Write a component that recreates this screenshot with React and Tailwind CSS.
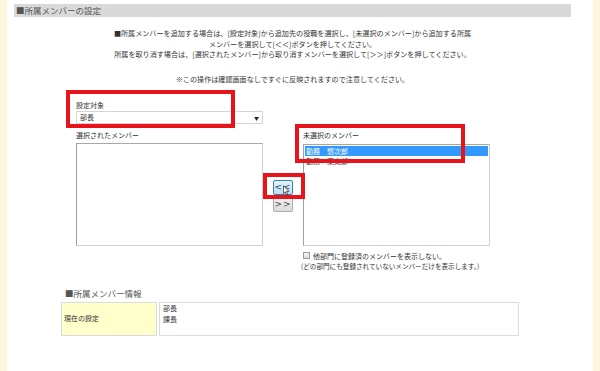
import React from "react";

const F = { fontFamily: '"Noto Sans CJK JP", "Noto Sans", sans-serif' };

export default function App() {
  return (
    <div className="relative flex w-[600px] h-[371px] overflow-hidden bg-white text-[#333]" style={F}>
      <div className="w-[7px] h-full bg-[#fff7dc]" />
      <div className="flex-1 flex flex-col pt-[4px] pl-[7px]">
        <div className="w-[557px] h-[13px] bg-[#d9d9d9] pl-[2px] text-[8.5px] leading-[13px] text-[#555]">
          ■所属メンバーの設定
        </div>
        <div className="w-[557px] mt-[11px] text-center text-[7.1px] leading-[10.5px] text-[#333]">
          <div>■所属メンバーを追加する場合は、[設定対象]から追加先の役職を選択し、[未選択のメンバー]から追加する所属</div>
          <div>メンバーを選択して[＜＜]ボタンを押してください。</div>
          <div>所属を取り消す場合は、[選択されたメンバー]から取り消すメンバーを選択して[＞＞]ボタンを押してください。</div>
          <div className="mt-[14.5px]">※この操作は確認画面なしですぐに反映されますので注意してください。</div>
        </div>

        <div className="flex ml-[62px] mt-[15px] text-[7px]">
          <div className="w-[187px] flex flex-col">
            <div className="h-[10px] leading-[10px]">設定対象</div>
            <div className="mt-[1px] h-[13px] border border-[#d4d4d4] bg-white flex items-center justify-between pl-[3px] pr-[3px]">
              <span className="leading-[11px]">部長</span>
              <span className="text-[5px] leading-[5px] text-[#222]">▼</span>
            </div>
            <div className="mt-[6px] h-[10px] leading-[10px]">選択されたメンバー</div>
            <div className="mt-[3px] h-[103px] border border-[#d0d0d0] border-l-[#a0a0a0] border-t-[#a8a8a8] bg-white" />
          </div>

          <div className="ml-[10px] w-[20px] pt-[80px] flex flex-col">
            <div className="h-[15px] rounded-[2px] border border-[#3c7fb1] bg-gradient-to-b from-[#e3f4fd] to-[#b9dff7] flex items-center justify-center text-[9px] leading-[10px] tracking-[1px] text-[#444]" style={{ fontFamily: '"DejaVu Sans", sans-serif' }}>
              &lt;&lt;
            </div>
            <div className="mt-[1px] h-[16px] rounded-[2px] border border-[#acacac] bg-gradient-to-b from-[#f2f2f2] to-[#dcdcdc] flex items-center justify-center text-[9px] leading-[10px] tracking-[1px] text-[#444]" style={{ fontFamily: '"DejaVu Sans", sans-serif' }}>
              &gt;&gt;
            </div>
          </div>

          <div className="ml-[10px] w-[187px] flex flex-col pt-[30px]">
            <div className="h-[10px] leading-[10px]">未選択のメンバー</div>
            <div className="mt-[4px] h-[102px] border border-[#d0d0d0] border-l-[#a0a0a0] border-t-[#a8a8a8] bg-white p-[1px]">
              <div className="h-[10px] leading-[10px] bg-[#3399ff] text-white pl-[1px]">勤務　惣次郎</div>
              <div className="h-[10px] leading-[10px] pl-[1px]">勤務　東太郎</div>
            </div>
            <div className="mt-[5px] h-[10px] flex items-center whitespace-nowrap">
              <span className="w-[7px] h-[7px] border border-[#999] bg-gradient-to-b from-[#f4f4f4] to-[#dedede] mr-[3px]" />
              <span className="leading-[10px]">他部門に登録済のメンバーを表示しない。</span>
            </div>
            <div className="h-[11px] leading-[11px] -ml-[2px] whitespace-nowrap text-[6.6px]">(どの部門にも登録されていないメンバーだけを表示します。)</div>
          </div>
        </div>

        <div className="ml-[51px] mt-[16px] h-[10px] text-[8.5px] leading-[10px] text-[#555]">■所属メンバー情報</div>
        <div className="ml-[47px] mt-[4px] w-[458px] h-[34px] flex gap-[2px] text-[7px]">
          <div className="w-[96px] h-full border border-[#dcdcdc] bg-[#ffffcc] flex items-center pl-[2px]">現在の設定</div>
          <div className="flex-1 h-full border border-[#dcdcdc] bg-white pl-[3px] leading-[11px]">
            <div>部長</div>
            <div>課長</div>
          </div>
        </div>
      </div>
      <div className="w-[7px] h-full bg-[#fff7dc]" />

      <div className="absolute left-[66px] top-[90px] w-[169px] h-[38px] border-[4px] border-[#e8141c]" />
      <div className="absolute left-[295px] top-[124px] w-[170px] h-[39px] border-[4px] border-[#e8141c]" />
      <div className="absolute left-[263px] top-[173px] w-[42px] h-[26px] border-[4px] border-[#e8141c]" />
      <svg className="absolute left-[283px] top-[185px]" width="7" height="11" viewBox="0 0 8 12">
        <path d="M0.5 0.5 L0.5 9.5 L2.6 7.6 L4.1 11 L5.4 10.4 L3.9 7.1 L6.8 7.1 Z" fill="white" stroke="#222" strokeWidth="0.8" strokeLinejoin="round" />
      </svg>
    </div>
  );
}
